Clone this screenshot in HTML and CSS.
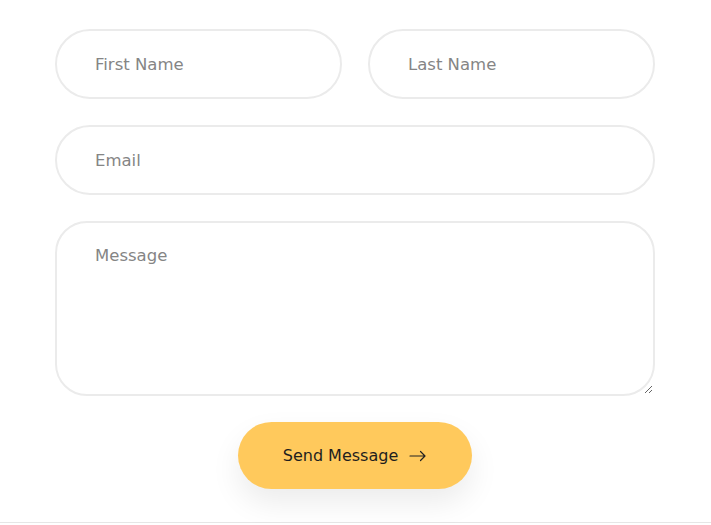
FILE: index.html
```html
<!DOCTYPE html>
<html lang="en">

<head>
    <meta charset="UTF-8">
    <title>Contact</title>
    <link rel="stylesheet" href="styles.css">
</head>

<body>
    <div class="page">
        <form class="contact">
            <div class="row">
                <input class="field" type="text" placeholder="First Name">
                <input class="field" type="text" placeholder="Last Name">
            </div>
            <input class="field" type="email" placeholder="Email">
            <textarea class="field area" placeholder="Message"></textarea>
            <div class="actions">
                <button class="send" type="button">Send Message <span class="arrow">
                    <svg width="18" height="12" viewBox="0 0 18 12" fill="none" stroke="#222" stroke-width="1.2" stroke-linecap="round" stroke-linejoin="round">
                        <path d="M1 6h15M11.5 1.5l4.5 4.5-4.5 4.5"/>
                    </svg>
                </span></button>
            </div>
        </form>
    </div>
</body>

</html>
```

FILE: styles.css
```css
* {
    margin: 0;
    padding: 0;
    box-sizing: border-box;
}

body {
    background-color: #fff;
    font-family: "DejaVu Sans", "Open Sans", sans-serif;
}

.page {
    height: 523px;
    border-bottom: 1px solid #e6e6e6;
    padding-top: 29px;
}

.contact {
    width: 600px;
    margin-left: 55px;
    display: flex;
    flex-direction: column;
    gap: 26px;
}

.row {
    display: flex;
    gap: 26px;
}

.row .field {
    flex: 1;
    min-width: 0;
}

.field {
    height: 70px;
    border: 2px solid #ebebeb;
    border-radius: 35px;
    padding: 0 38px;
    font-family: inherit;
    font-size: 16.5px;
    color: #333;
    outline: none;
    background: #fff;
}

.field::placeholder {
    color: #858585;
}

.area {
    height: 175px;
    border-radius: 32px;
    padding-top: 23px;
    resize: vertical;
}

.actions {
    display: flex;
    justify-content: center;
}

.send {
    width: 234px;
    height: 67px;
    border: none;
    border-radius: 34px;
    background-color: #ffc95c;
    color: #1e1e1e;
    font-family: inherit;
    font-size: 16px;
    display: flex;
    align-items: center;
    justify-content: center;
    gap: 11px;
    box-shadow: 0 14px 30px rgba(0, 0, 0, 0.08);
    cursor: pointer;
}

.arrow {
    display: flex;
}
```
